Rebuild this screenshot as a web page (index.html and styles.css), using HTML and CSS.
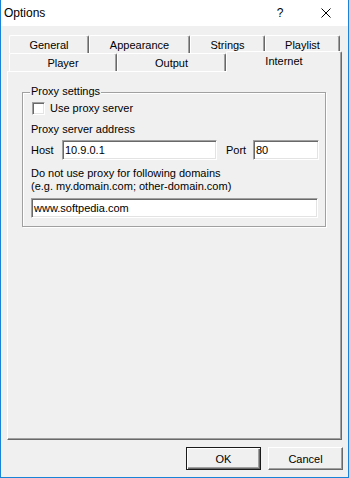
FILE: index.html
```html
<!DOCTYPE html>
<html>
<head>
<meta charset="utf-8">
<link rel="stylesheet" href="styles.css">
</head>
<body>
<div class="window">
  <div class="titlebar">
    <span class="title">Options</span>
    <span class="spacer"></span>
    <span class="cap-btn help">?</span>
    <span class="cap-btn close">
      <svg width="10" height="10" viewBox="0 0 10 10"><path d="M0.5 0.5 L9.5 9.5 M9.5 0.5 L0.5 9.5" stroke="#000" stroke-width="1" fill="none"/></svg>
    </span>
  </div>
  <div class="tabs">
    <div class="tab-row">
      <div class="tab w80">General</div>
      <div class="tab w101">Appearance</div>
      <div class="tab w75">Strings</div>
      <div class="tab w75">Playlist</div>
    </div>
    <div class="tab-row">
      <div class="tab w108">Player</div>
      <div class="tab w109">Output</div>
      <div class="tab selected">Internet</div>
    </div>
  </div>
  <div class="panel">
    <div class="group">
      <span class="legend">Proxy settings</span>
      <div class="check-row">
        <span class="checkbox"></span>
        <span class="check-label">Use proxy server</span>
      </div>
      <div class="text addr">Proxy server address</div>
      <div class="host-row">
        <span class="host-label">Host</span>
        <span class="input host-input">10.9.0.1</span>
        <span class="port-label">Port</span>
        <span class="input port-input">80</span>
      </div>
      <div class="text note">Do not use proxy for following domains<br>(e.g. my.domain.com; other-domain.com)</div>
      <span class="input domain-input">www.softpedia.com</span>
    </div>
  </div>
  <div class="buttons">
    <div class="btn default">OK</div>
    <div class="btn">Cancel</div>
  </div>
</div>
</body>
</html>
```
FILE: styles.css
```css
html, body {
  margin: 0;
  padding: 0;
  background: #f0f0f0;
}
.window {
  width: 349px;
  height: 478px;
  box-sizing: border-box;
  border-left: 1px solid #1883d7;
  border-right: 1px solid #1883d7;
  border-bottom: 1px solid #1883d7;
  background: #f0f0f0;
  font-family: "Liberation Sans", Arial, sans-serif;
  font-size: 11px;
  color: #000;
  display: flex;
  flex-direction: column;
}
.titlebar {
  height: 26px;
  background: #fff;
  display: flex;
  align-items: center;
  padding-left: 3px;
}
.title {
  font-size: 12px;
  line-height: 14px;
}
.spacer { flex: 1; }
.cap-btn {
  height: 26px;
  display: flex;
  align-items: center;
  justify-content: center;
}
.help {
  width: 46px;
  font-size: 12px;
}
.close {
  width: 45px;
}
.tabs {
  margin-top: 9px;
  padding-left: 8px;
}
.tab-row {
  display: flex;
  align-items: flex-start;
  height: 18px;
}
.tab {
  box-sizing: border-box;
  height: 18px;
  border-top: 1px solid #fff;
  border-left: 1px solid #fff;
  border-right: 1px solid #696969;
  border-radius: 2px 2px 0 0;
  box-shadow: inset -1px 0 0 #a0a0a0;
  padding-top: 1px;
  line-height: 16px;
  text-align: center;
  background: #f0f0f0;
  white-space: nowrap;
}
.w75 { width: 75px; }
.w80 { width: 80px; }
.w101 { width: 101px; }
.w108 { width: 108px; }
.w109 { width: 109px; }
.tab.selected {
  width: 116px;
  height: 21px;
  margin-top: -2px;
  position: relative;
  z-index: 1;
}
.panel {
  box-sizing: border-box;
  margin-left: 6px;
  width: 335px;
  height: 369px;
  border-top: 1px solid #fff;
  border-left: 1px solid #fff;
  border-right: 1px solid #696969;
  border-bottom: 1px solid #696969;
  box-shadow: inset -1px -1px 0 #a0a0a0;
  padding: 20px 0 0 14px;
}
.group {
  position: relative;
  box-sizing: border-box;
  width: 304px;
  height: 135px;
  border: 1px solid #a0a0a0;
  box-shadow: inset 1px 1px 0 #fff, 1px 1px 0 #fff;
  padding: 9px 0 0 8px;
}
.legend {
  position: absolute;
  top: -9px;
  left: 7px;
  padding: 0 1px;
  line-height: 14px;
  background: #f0f0f0;
}
.check-row {
  display: flex;
  align-items: center;
  height: 13px;
}
.checkbox {
  box-sizing: border-box;
  width: 13px;
  height: 13px;
  margin-left: 1px;
  background: #fff;
  border: 1px solid;
  border-color: #a0a0a0 #fff #fff #a0a0a0;
  box-shadow: inset 1px 1px 0 #696969, inset -1px -1px 0 #e3e3e3;
}
.check-label {
  margin-left: 5px;
  line-height: 13px;
}
.text {
  line-height: 13px;
}
.addr {
  margin-top: 8px;
}
.host-row {
  display: flex;
  align-items: center;
  height: 20px;
  margin-top: 4px;
}
.input {
  box-sizing: border-box;
  display: block;
  height: 20px;
  background: #fff;
  border: 1px solid;
  border-color: #a0a0a0 #fff #fff #a0a0a0;
  box-shadow: inset 1px 1px 0 #696969, inset -1px -1px 0 #e3e3e3;
  padding-left: 2px;
  line-height: 18px;
  white-space: nowrap;
}
.host-label {
  width: 31px;
}
.host-input {
  width: 155px;
}
.port-label {
  margin-left: 9px;
  width: 27px;
}
.port-input {
  width: 66px;
}
.note {
  margin-top: 7px;
}
.domain-input {
  margin-top: 5px;
  width: 287px;
}
.buttons {
  display: flex;
  justify-content: flex-end;
  gap: 7px;
  margin-top: 7px;
  padding-right: 5px;
}
.btn {
  box-sizing: border-box;
  width: 75px;
  height: 23px;
  border: 1px solid;
  border-color: #fff #696969 #696969 #fff;
  box-shadow: inset -1px -1px 0 #a0a0a0;
  display: flex;
  align-items: center;
  justify-content: center;
  background: #f0f0f0;
}
.btn.default {
  border-color: #1a1a1a;
  box-shadow: inset 1px 1px 0 #fff, inset -1px -1px 0 #696969, inset -2px -2px 0 #a0a0a0;
}
```
